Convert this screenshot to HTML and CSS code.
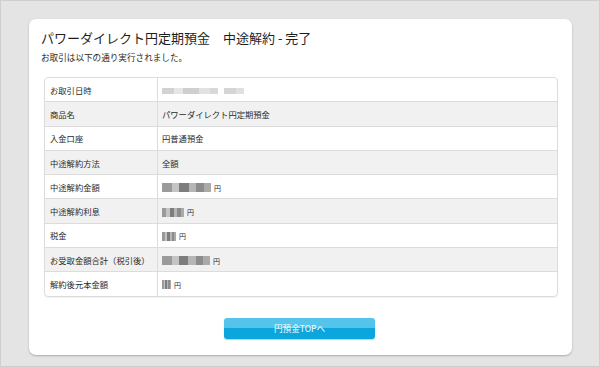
FILE: index.html
```html
<!DOCTYPE html>
<html lang="ja">
<head>
<meta charset="utf-8">
<link rel="stylesheet" href="styles.css">
</head>
<body>
<div class="frame">
  <div class="card">
    <h1 class="title">パワーダイレクト円定期預金　中途解約 - 完了</h1>
    <p class="lead">お取引は以下の通り実行されました。</p>
    <table class="info">
      <colgroup><col class="c-label"><col></colgroup>
      <tr><th>お取引日時</th><td><span class="mosaic light w82"></span></td></tr>
      <tr><th>商品名</th><td>パワーダイレクト円定期預金</td></tr>
      <tr><th>入金口座</th><td>円普通預金</td></tr>
      <tr><th>中途解約方法</th><td>全額</td></tr>
      <tr><th>中途解約金額</th><td><span class="mosaic w49"></span><span class="yen">円</span></td></tr>
      <tr><th>中途解約利息</th><td><span class="mosaic w24"></span><span class="yen">円</span></td></tr>
      <tr><th>税金</th><td><span class="mosaic w15"></span><span class="yen">円</span></td></tr>
      <tr><th>お受取金額合計（税引後）</th><td><span class="mosaic w48"></span><span class="yen">円</span></td></tr>
      <tr><th>解約後元本金額</th><td><span class="mosaic w10"></span><span class="yen">円</span></td></tr>
    </table>
    <div class="actions">
      <a class="btn">円預金TOPへ</a>
    </div>
  </div>
</div>
</body>
</html>
```
FILE: styles.css
```css
html, body {
  margin: 0;
  padding: 0;
}
body {
  font-family: "Noto Sans CJK JP", "Noto Sans", sans-serif;
  color: #2a2a2a;
}
.frame {
  width: 600px;
  height: 367px;
  box-sizing: border-box;
  background: #e4e4e4;
  border: 1px solid #cfcfcf;
  padding: 18px 27px 0 28px;
}
.card {
  background: #fff;
  border-radius: 7px;
  height: 336px;
  box-sizing: border-box;
  box-shadow: 0 1px 2px rgba(0, 0, 0, 0.25);
  padding: 9px 14px 0 12px;
}
.title {
  margin: 0;
  font-size: 13px;
  font-weight: normal;
  line-height: 20px;
  color: #1e1e1e;
}
.lead {
  margin: 1px 0 0 0;
  font-size: 8.6px;
  line-height: 16px;
}
.info {
  margin: 12px 0 0 3px;
  width: 514px;
  table-layout: fixed;
  border-collapse: separate;
  border-spacing: 0;
  border: 1px solid #dcdcdc;
  border-radius: 4px;
  font-size: 8.3px;
  box-shadow: 0 1px 1px rgba(0, 0, 0, 0.06);
}
.c-label {
  width: 113px;
}
.info th, .info td {
  height: 23.3px;
  padding: 0 0 0 5px;
  text-align: left;
  font-weight: normal;
  border-top: 1px solid #dcdcdc;
  vertical-align: middle;
  line-height: 12px;
  white-space: nowrap;
}
.info tr:first-child th, .info tr:first-child td {
  border-top: none;
}
.info th {
  border-right: 1px solid #dcdcdc;
}
.info td {
  padding-left: 4px;
}
.info tr:nth-child(even) th, .info tr:nth-child(even) td {
  background: #f1f1f1;
}
.mosaic {
  display: inline-block;
  height: 9px;
  vertical-align: middle;
  background:
    linear-gradient(90deg, #9a9a9a 0 20%, #c4c4c4 20% 35%, #7d7d7d 35% 55%, #b5b5b5 55% 70%, #8c8c8c 70% 85%, #aaa 85% 100%);
  filter: blur(0.7px);
}
.mosaic.light {
  height: 6px;
  background:
    linear-gradient(90deg, #d2d2d2 0 15%, #e6e6e6 15% 25%, #cfcfcf 25% 45%, #e2e2e2 45% 58%, #d8d8d8 58% 68%, #fff 68% 75%, #d5d5d5 75% 90%, #e0e0e0 90% 100%);
}
.w82 { width: 82px; }
.w49 { width: 49px; }
.w48 { width: 48px; }
.w24 { width: 22px; }
.w15 { width: 14px; }
.w10 { width: 9px; }
.yen {
  font-size: 7px;
  margin-left: 3px;
  vertical-align: middle;
}
.actions {
  display: flex;
  justify-content: center;
  margin-top: 21px;
}
.btn {
  display: block;
  width: 151px;
  height: 21px;
  line-height: 21px;
  text-align: center;
  color: #fff;
  font-size: 8.6px;
  border-radius: 3px;
  background: linear-gradient(#55c4ea 0 45%, #0ba6dd 50% 100%);
  box-shadow: 0 1px 1px rgba(0, 0, 0, 0.2);
}
```
